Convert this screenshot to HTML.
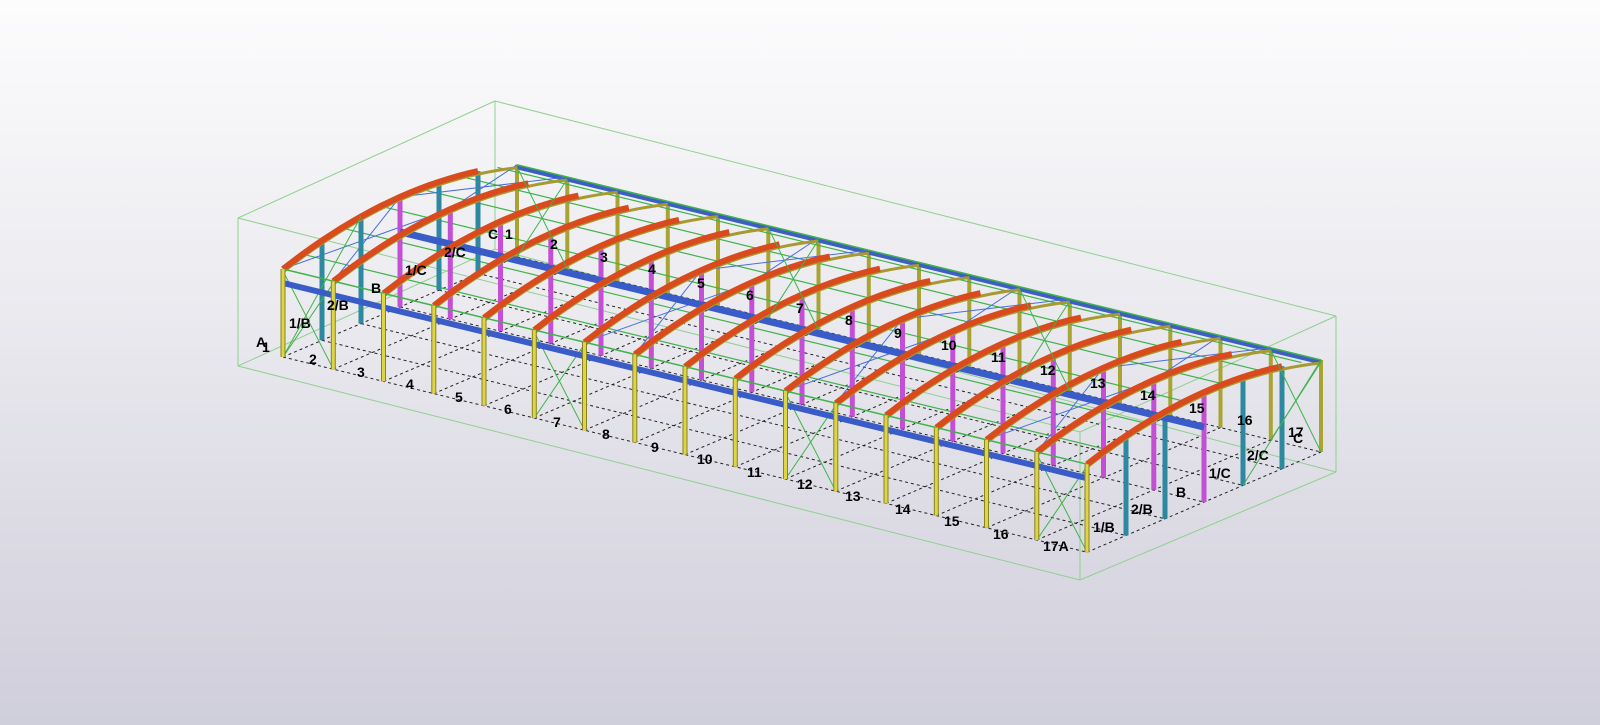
<!DOCTYPE html>
<html><head><meta charset="utf-8"><style>
html,body{margin:0;padding:0;width:1600px;height:725px;overflow:hidden}
body{background:linear-gradient(#fcfcfd 0%,#eeeef2 35%,#dddce5 70%,#cfcedb 100%)}
svg{position:absolute;left:0;top:0}
text{font-family:"Liberation Sans",sans-serif;font-weight:bold;font-size:14px;fill:#000}
</style></head><body>
<svg id="g" width="1600" height="725" xmlns="http://www.w3.org/2000/svg"></svg>
<svg width="1600" height="725" xmlns="http://www.w3.org/2000/svg">
<text x="256" y="347">A</text><text x="262" y="352">1</text>
<text x="309" y="364">2</text><text x="357" y="377">3</text><text x="406" y="389">4</text><text x="455" y="402">5</text><text x="504" y="414">6</text><text x="553" y="427">7</text><text x="602" y="439">8</text><text x="651" y="452">9</text><text x="697" y="464">10</text><text x="747" y="477">11</text><text x="797" y="489">12</text><text x="845" y="501">13</text><text x="895" y="514">14</text><text x="944" y="526">15</text><text x="993" y="539">16</text><text x="1043" y="551">17A</text>
<text x="289" y="328">1/B</text><text x="327" y="310">2/B</text><text x="371" y="293">B</text><text x="405" y="275">1/C</text><text x="444" y="257">2/C</text><text x="488" y="239">C</text><text x="505" y="239">1</text>
<text x="550" y="249">2</text><text x="600" y="262">3</text><text x="648" y="274">4</text><text x="697" y="288">5</text><text x="746" y="300">6</text><text x="796" y="313">7</text><text x="845" y="325">8</text><text x="894" y="338">9</text><text x="941" y="350">10</text><text x="991" y="362">11</text><text x="1040" y="375">12</text><text x="1090" y="388">13</text><text x="1140" y="400">14</text><text x="1189" y="413">15</text><text x="1237" y="425">16</text><text x="1288" y="437">17</text><text x="1293" y="443">C</text>
<text x="1093" y="532">1/B</text><text x="1131" y="514">2/B</text><text x="1176" y="497">B</text><text x="1209" y="478">1/C</text><text x="1247" y="460">2/C</text>
</svg>
<script>
const S=document.getElementById('g');let h='';
function P(i,j,z){return [283+i*50.25+j*39,357+i*12.2-j*16.7-z];}
function L(a,b,c,w,extra){h+=`<line x1="${a[0].toFixed(1)}" y1="${a[1].toFixed(1)}" x2="${b[0].toFixed(1)}" y2="${b[1].toFixed(1)}" stroke="${c}" stroke-width="${w}" ${extra||''}/>`;}
function R(j){return 88+j*4/6+20*(1-Math.pow((j-3)/3,2));}
const b=[[238,218],[495,101],[1336,316],[1080,432]],bb=[[238,366],[495,249],[1336,472],[1080,580]];
for(let k=0;k<4;k++){L(b[k],b[(k+1)%4],'#8fd08f',1);L(bb[k],bb[(k+1)%4],'#8fd08f',1);L(b[k],bb[k],'#8fd08f',1);}
for(let i=0;i<=16;i++)L(P(i,0,0),P(i,6,0),'#222',1,'stroke-dasharray="3,3"');
for(let j=0;j<=6;j++)L(P(0,j,0),P(16,j,0),'#222',1,'stroke-dasharray="3,3"');
for(let i=0;i<=16;i++)L(P(i,6,0),P(i,6,R(6)),'#a9a333',4);
L(P(0,6,R(6)-2),P(16,6,R(6)-2),'#3d5fc4',5);
for(const j of [0.5,1.5,2.5,3.5,4.5,5.5])L(P(0,j,R(j)),P(16,j,R(j)),'#3fb34a',1.2);
for(const i of [0,6,10,14]){L(P(i,0,R(0)),P(i+1,3,R(3)),'#4a6ee0',1);L(P(i+1,0,R(0)),P(i,3,R(3)),'#4a6ee0',1);L(P(i,3,R(3)),P(i+1,6,R(6)),'#4a6ee0',1);L(P(i+1,3,R(3)),P(i,6,R(6)),'#4a6ee0',1);}
for(const i of [0,16]){for(const j of [1,2,4,5])L(P(i,j,0),P(i,j,R(j)),'#2e88a0',5);}
for(let i=0;i<=16;i++)L(P(i,3,0),P(i,3,R(3)),'#c24fd4',5);
L(P(0,3,75),P(16,3,75),'#3a5cc8',7);
for(let i=0;i<=16;i++){let d='',d2='';for(let s=0;s<=24;s++){const j=s/4;const p=P(i,j,R(j));d+=(s?'L':'M')+p[0].toFixed(1)+' '+(p[1]+3).toFixed(1);if(s<=20)d2+=(s?'L':'M')+p[0].toFixed(1)+' '+p[1].toFixed(1);}
h+=`<path d="${d}" fill="none" stroke="#a89a30" stroke-width="3"/>`;h+=`<path d="${d2}" fill="none" stroke="#d94a1c" stroke-width="6"/>`;}
L(P(0,0,88),P(16,0,88),'#3fb34a',1.5);L(P(0,6,R(6)),P(16,6,R(6)),'#3fb34a',1.5);
for(const i of [0,5,10,15]){L(P(i,0,0),P(i+1,0,86),'#3fb34a',1);L(P(i+1,0,0),P(i,0,86),'#3fb34a',1);L(P(i,6,0),P(i+1,6,90),'#3fb34a',1);L(P(i+1,6,0),P(i,6,90),'#3fb34a',1);}
L(P(0,0,0),P(0,2,R(2)),'#3fb34a',1);L(P(16,4,0),P(16,6,R(6)),'#3fb34a',1);
L(P(0,0,74),P(16,0,74),'#3a5cc8',6);
for(let i=0;i<=16;i++){L(P(i,0,0),P(i,0,88),'#8a8420',5);L(P(i,0,0),P(i,0,88),'#dcd548',3);}
S.innerHTML=h;
</script>
</body></html>
